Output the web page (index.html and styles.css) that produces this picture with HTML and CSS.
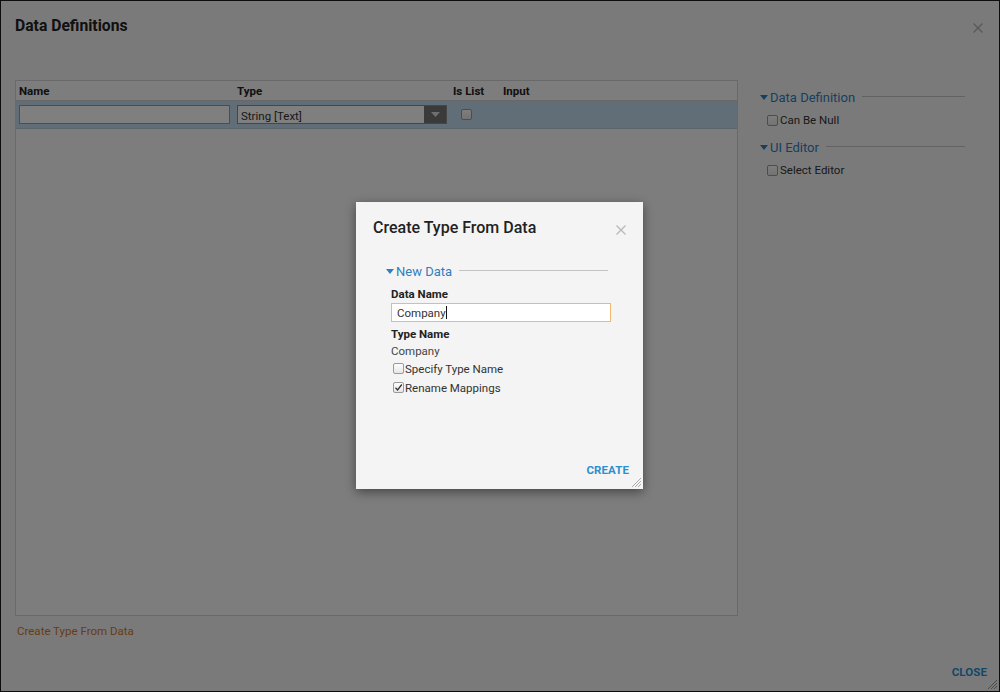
FILE: index.html
```html
<!DOCTYPE html>
<html>
<head>
<meta charset="utf-8">
<link rel="stylesheet" href="styles.css">
</head>
<body>
<div class="app">
  <div class="dlg-header">
    <h1 class="dlg-title">Data Definitions</h1>
    <svg class="x-icon" width="10" height="10" viewBox="0 0 10 10"><path d="M0.5 0.5L9.5 9.5M9.5 0.5L0.5 9.5" stroke="#b0b0b0" stroke-width="1.3"/></svg>
  </div>
  <div class="dlg-body">
    <div class="grid">
      <div class="grid-head">
        <div class="col c-name">Name</div>
        <div class="col c-type">Type</div>
        <div class="col c-list">Is List</div>
        <div class="col c-input">Input</div>
      </div>
      <div class="grid-row">
        <div class="col c-name"><div class="text-input"></div></div>
        <div class="col c-type">
          <div class="select"><span class="select-val">String [Text]</span><span class="select-btn"><svg width="9" height="5" viewBox="0 0 9 5"><path d="M0 0H9L4.5 5Z" fill="#e0e0e0"/></svg></span></div>
        </div>
        <div class="col c-list"><span class="cb"></span></div>
        <div class="col c-input"></div>
      </div>
    </div>
    <div class="side">
      <div class="sec-head"><span class="tri"></span><span class="sec-title">Data Definition</span><span class="sec-line"></span></div>
      <label class="cb-row s"><span class="cb"></span>Can Be Null</label>
      <div class="sec-head"><span class="tri"></span><span class="sec-title">UI Editor</span><span class="sec-line"></span></div>
      <label class="cb-row s"><span class="cb"></span>Select Editor</label>
    </div>
  </div>
  <div class="dlg-footer-link">Create Type From Data</div>
  <div class="dlg-actions"><span class="btn-link">CLOSE</span></div>
  <svg class="grip" width="10" height="10" viewBox="0 0 10 10"><path d="M9 3L3 9M9 6L6 9M9 0L0 9" stroke="#999" stroke-width="1"/></svg>

  <div class="overlay"></div>

  <div class="modal">
    <div class="modal-header">
      <h2 class="modal-title">Create Type From Data</h2>
      <svg class="x-icon" width="10" height="10" viewBox="0 0 10 10"><path d="M0.5 0.5L9.5 9.5M9.5 0.5L0.5 9.5" stroke="#b8b8b8" stroke-width="1.3"/></svg>
    </div>
    <div class="modal-body">
      <div class="sec-head"><span class="tri"></span><span class="sec-title">New Data</span><span class="sec-line"></span></div>
      <div class="fields">
        <div class="field-label">Data Name</div>
        <div class="text-input focus"><span>Company</span><span class="caret"></span></div>
        <div class="field-label second">Type Name</div>
        <div class="field-value">Company</div>
        <label class="cb-row m"><span class="cb"></span>Specify Type Name</label>
        <label class="cb-row m"><span class="cb checked"><svg width="9" height="9" viewBox="0 0 9 9"><path d="M1.5 4.8L3.6 7L7.8 1.5" stroke="#333" stroke-width="1.3" fill="none"/></svg></span>Rename Mappings</label>
      </div>
    </div>
    <div class="modal-actions"><span class="btn-link">CREATE</span></div>
    <svg class="grip" width="10" height="10" viewBox="0 0 10 10"><path d="M9 3L3 9M9 6L6 9M9 0L0 9" stroke="#aaa" stroke-width="1"/></svg>
  </div>
</div>
</body>
</html>
```

FILE: styles.css
```css
* { box-sizing: border-box; }
html, body { margin: 0; padding: 0; }
body {
  font-family: Roboto, "Liberation Sans", Arial, sans-serif;
  font-size: 11.5px;
  color: #222;
  width: 1000px;
  height: 692px;
  overflow: hidden;
}
.app {
  position: relative;
  width: 1000px;
  height: 692px;
  border: 1px solid #1a1a1a;
  background: #f5f5f5;
  display: flex;
  flex-direction: column;
}
.dlg-header {
  display: flex;
  justify-content: space-between;
  align-items: center;
  height: 50px;
  padding: 0 16px 0 14px;
}
.dlg-title {
  margin: 0;
  font-size: 15.7px;
  font-weight: 700;
  color: #222;
  margin-top: -2px;
}
.dlg-header .x-icon { margin-top: 4px; }
.dlg-body {
  display: flex;
  padding: 29px 0 0 14px;
  gap: 22px;
}
.grid {
  width: 723px;
  height: 536px;
  border: 1px solid #d3d3d3;
  background: #fafafa;
}
.grid-head {
  display: flex;
  height: 20px;
  align-items: center;
  border-bottom: 1px solid #cfcfcf;
  font-weight: 700;
  color: #222;
}
.grid-row {
  display: flex;
  height: 28px;
  align-items: center;
  background: #c3dcee;
  border-bottom: 1px solid #b5cad8;
}
.col { flex: none; }
.c-name { width: 218px; padding-left: 3px; }
.c-type { width: 216px; padding-left: 3px; }
.c-list { width: 50px; padding-left: 3px; }
.c-input { flex: 1; padding-left: 3px; }
.grid-row .c-list { padding-left: 11px; display: flex; align-items: center; }
.text-input {
  height: 19px;
  width: 211px;
  border: 1px solid #9a9a9a;
  background: #fff;
}
.select {
  display: flex;
  width: 210px;
  height: 19px;
  border: 1px solid #8c8c8c;
  background: #fff;
}
.select-val {
  flex: 1;
  padding-left: 3px;
  display: flex;
  align-items: center;
  padding-top: 2px;
  color: #333;
}
.select-btn {
  width: 22px;
  background: #747474;
  display: flex;
  align-items: center;
  justify-content: center;
}
.cb {
  display: inline-flex;
  align-items: center;
  justify-content: center;
  width: 11px;
  height: 11px;
  border: 1px solid #9a9a9a;
  border-radius: 2px;
  background: linear-gradient(#fdfdfd, #e6e6e6);
  flex: none;
}
.side { width: 205px; }
.sec-head {
  display: flex;
  align-items: center;
  height: 18px;
  margin-top: 8px;
}
.tri {
  width: 0;
  height: 0;
  border-left: 4px solid transparent;
  border-right: 4px solid transparent;
  border-top: 5px solid #2f7fbf;
  margin-right: 2px;
  margin-top: 1px;
}
.sec-title {
  font-size: 13px;
  color: #2f7fbf;
}
.sec-line {
  flex: 1;
  height: 1px;
  background: #c4c4c4;
  margin-left: 7px;
  margin-top: -1px;
}
.cb-row {
  display: flex;
  align-items: center;
  gap: 2px;
  height: 20px;
  padding-left: 7px;
  color: #333;
}
.cb-row.s { margin-top: 4px; }
.dlg-footer-link {
  padding: 8px 0 0 16px;
  color: #d0792a;
}
.dlg-actions {
  flex: 1;
  display: flex;
  justify-content: flex-end;
  align-items: flex-end;
  padding: 0 12px 12px 0;
}
.btn-link {
  font-weight: 700;
  font-size: 11.5px;
  color: #2b8fd0;
  letter-spacing: 0.1px;
}
.grip { position: absolute; right: 1px; bottom: 1px; }
.overlay {
  position: absolute;
  inset: -1px;
  background: rgba(0, 0, 0, 0.5);
}
.modal {
  position: absolute;
  left: 355px;
  top: 201px;
  width: 287px;
  height: 287px;
  background: #f4f4f4;
  box-shadow: 0 3px 10px rgba(0, 0, 0, 0.45);
  display: flex;
  flex-direction: column;
}
.modal-header {
  display: flex;
  justify-content: space-between;
  align-items: center;
  padding: 12px 17px 4px 17px;
  height: 42px;
}
.modal-title {
  margin: 0;
  font-size: 16px;
  font-weight: 500;
  color: #222;
}
.modal-header .x-icon { margin-top: 6px; }
.modal-body { padding: 18px 35px 0 30px; }
.modal-body .sec-head { margin-top: 0; }
.fields { padding-left: 5px; }
.field-label {
  font-weight: 700;
  color: #222;
  margin-top: 7px;
  line-height: 15px;
}
.field-label.second { margin-top: 5px; }
.text-input.focus {
  width: 220px;
  margin-top: 1px;
  border-color: #f0b870;
  padding-left: 5px;
  color: #333;
  display: flex;
  align-items: center;
}
.caret {
  display: inline-block;
  width: 1px;
  height: 13px;
  background: #111;
}
.field-value {
  color: #444;
  margin-top: 2px;
  line-height: 15px;
}
.cb-row.m {
  padding-left: 2px;
  height: 19px;
  gap: 1px;
}
.modal-actions {
  flex: 1;
  display: flex;
  justify-content: flex-end;
  align-items: flex-end;
  padding: 0 14px 12px 0;
}
```
